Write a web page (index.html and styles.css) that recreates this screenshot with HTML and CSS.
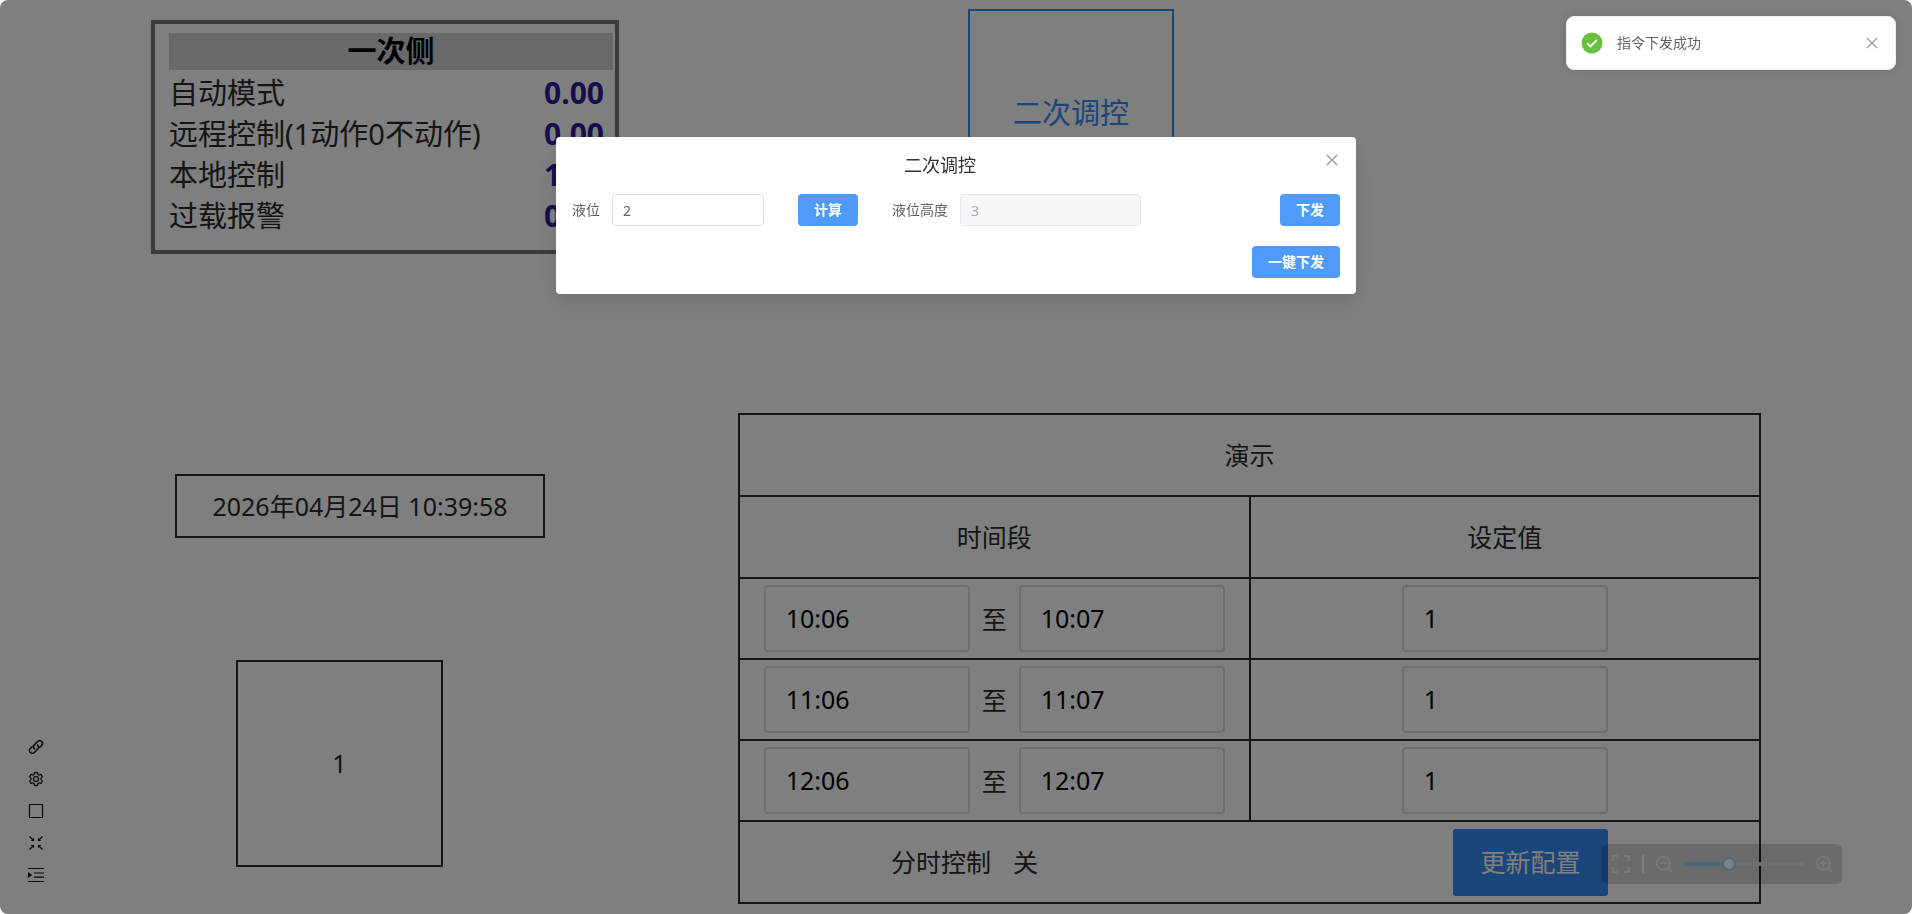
FILE: index.html
```html
<!DOCTYPE html>
<html lang="zh-CN">
<head>
<meta charset="utf-8">
<title>二次调控</title>
<link rel="stylesheet" href="styles.css">
</head>
<body>
<main class="stage">
  <section class="node panel">
    <h2 class="panel-title">一次侧</h2>
    <dl class="readings">
      <div class="reading"><dt>自动模式</dt><dd>0.00</dd></div>
      <div class="reading"><dt>远程控制(1动作0不动作)</dt><dd>0.00</dd></div>
      <div class="reading"><dt>本地控制</dt><dd>1.00</dd></div>
      <div class="reading"><dt>过载报警</dt><dd>0.00</dd></div>
    </dl>
  </section>
  <button class="node box box-link" type="button">二次调控</button>
  <time class="node box box-clock">2026年04月24日 10:39:58</time>
  <div class="node box box-value">1</div>
  <div class="node schedule">
    <table class="schedule-table">
      <tr><th colspan="2">演示</th></tr>
      <tr><th>时间段</th><th>设定值</th></tr>
      <tr class="slot">
        <td><div class="range"><input class="field" type="text" value="10:06" aria-label="开始时间 1"><span class="to">至</span><input class="field" type="text" value="10:07" aria-label="结束时间 1"></div></td>
        <td><div class="setpoint"><input class="field" type="text" value="1" aria-label="设定值 1"></div></td>
      </tr>
      <tr class="slot">
        <td><div class="range"><input class="field" type="text" value="11:06" aria-label="开始时间 2"><span class="to">至</span><input class="field" type="text" value="11:07" aria-label="结束时间 2"></div></td>
        <td><div class="setpoint"><input class="field" type="text" value="1" aria-label="设定值 2"></div></td>
      </tr>
      <tr class="slot">
        <td><div class="range"><input class="field" type="text" value="12:06" aria-label="开始时间 3"><span class="to">至</span><input class="field" type="text" value="12:07" aria-label="结束时间 3"></div></td>
        <td><div class="setpoint"><input class="field" type="text" value="1" aria-label="设定值 3"></div></td>
      </tr>
      <tr>
        <td colspan="2"><div class="schedule-foot"><span class="mode"><span>分时控制</span><span>关</span></span><button class="update" type="button">更新配置</button></div></td>
      </tr>
    </table>
  </div>
</main>

<nav class="tools" aria-label="工具">
  <button class="icon-button" type="button" aria-label="链接"><svg viewBox="0 0 16 16"><g fill="none" stroke="currentColor" stroke-width="1.5" stroke-linecap="round"><path d="M6.500 9.900a2.700 2.700 0 0 1-.2-4L9.700 2.500a2.700 2.700 0 0 1 4 3.900L11.600 8.500"/><path d="M9.500 6.100a2.700 2.700 0 0 1 .2 4L6.300 13.500a2.700 2.700 0 0 1-4-3.900L4.400 7.500"/></g></svg></button>
  <button class="icon-button" type="button" aria-label="设置"><svg viewBox="0 0 1024 1024"><path fill="currentColor" stroke="currentColor" stroke-width="20" d="M600.704 64a32 32 0 0 1 30.464 22.208l35.200 109.376c14.784 7.232 28.928 15.360 42.432 24.512l112.384-24.192a32 32 0 0 1 34.432 15.360L944.320 364.800a32 32 0 0 1-4.032 37.504l-77.120 85.120a357.120 357.120 0 0 1 0 49.024l77.120 85.248a32 32 0 0 1 4.032 37.504l-88.704 153.600a32 32 0 0 1-34.432 15.296L708.800 803.904c-13.440 9.088-27.648 17.280-42.368 24.512l-35.264 109.376A32 32 0 0 1 600.704 960H423.296a32 32 0 0 1-30.464-22.208L357.696 828.480a351.616 351.616 0 0 1-42.560-24.640l-112.320 24.256a32 32 0 0 1-34.432-15.360L79.680 659.200a32 32 0 0 1 4.032-37.504l77.120-85.248a357.120 357.120 0 0 1 0-48.896l-77.120-85.248A32 32 0 0 1 79.680 364.800l88.704-153.600a32 32 0 0 1 34.432-15.296l112.320 24.256c13.568-9.152 27.776-17.408 42.560-24.640l35.200-109.312A32 32 0 0 1 423.232 64H600.640zm-23.424 64H446.720l-36.352 113.088-24.512 11.968a294.113 294.113 0 0 0-34.816 20.096l-22.656 15.360-116.224-25.088-65.280 113.152 79.680 88.192-1.920 27.136a293.120 293.120 0 0 0 0 40.192l1.920 27.136-79.808 88.192 65.344 113.152 116.224-25.024 22.656 15.296a294.113 294.113 0 0 0 34.816 20.096l24.512 11.968L446.720 896h130.688l36.480-113.152 24.448-11.904a288.282 288.282 0 0 0 34.752-20.096l22.592-15.296 116.288 25.024 65.280-113.152-79.744-88.192 1.920-27.136a293.120 293.120 0 0 0 0-40.256l-1.920-27.136 79.808-88.128-65.344-113.152-116.288 24.960-22.592-15.232a287.616 287.616 0 0 0-34.752-20.096l-24.448-11.904L577.344 128zM512 320a192 192 0 1 1 0 384 192 192 0 0 1 0-384zm0 64a128 128 0 1 0 0 256 128 128 0 0 0 0-256z"/></svg></button>
  <button class="icon-button" type="button" aria-label="选区"><svg viewBox="0 0 16 16"><path fill="none" stroke="currentColor" stroke-width="1.200" d="M1.500 1.500h13v13h-13z"/></svg></button>
  <button class="icon-button" type="button" aria-label="收缩"><svg viewBox="0 0 16 16"><path fill="none" stroke="currentColor" stroke-width="1.200" d="M1.500 1.500L5 5M14.500 1.500L11 5M1.500 14.500L5 11M14.500 14.500L11 11"/><path fill="currentColor" d="M6 6V2.800L2.800 6zM10 6V2.800L13.200 6zM6 10v3.200L2.800 10zM10 10v3.200l3.200-3.200z"/></svg></button>
  <button class="icon-button" type="button" aria-label="展开菜单"><svg viewBox="0 0 16 16"><path fill="none" stroke="currentColor" stroke-width="1.200" d="M0 1.500h16M6 6h10M6 10.200h10M0 14.500h16"/><path fill="currentColor" d="M0 5l4.200 3L0 11z"/></svg></button>
</nav>

<div class="zoombar">
  <button class="icon-button fit" type="button" aria-label="全屏"><svg viewBox="0 0 18 18"><path fill="none" stroke="currentColor" stroke-width="1.600" d="M1 6V1h5M12 1h5v5M17 12v5h-5M6 17H1v-5"/></svg></button>
  <span class="divider"></span>
  <button class="icon-button" type="button" aria-label="缩小"><svg viewBox="0 0 16 16"><g fill="none" stroke="currentColor" stroke-width="1.300"><circle cx="7.200" cy="7.200" r="6.500"/><path d="M4 7.200h6.400M12 12l3.700 3.700"/></g></svg></button>
  <input class="zoom-range" type="range" min="0" max="100" value="36" aria-label="缩放">
  <button class="icon-button" type="button" aria-label="放大"><svg viewBox="0 0 16 16"><g fill="none" stroke="currentColor" stroke-width="1.300"><circle cx="7.200" cy="7.200" r="6.500"/><path d="M4 7.200h6.400M7.200 4v6.400M12 12l3.700 3.700"/></g></svg></button>
</div>

<div class="overlay">
  <section class="dialog" role="dialog" aria-modal="true" aria-labelledby="dialog-title">
    <h1 class="dialog-title" id="dialog-title">二次调控</h1>
    <button class="icon-button dialog-close" type="button" aria-label="关闭"><svg viewBox="0 0 16 16"><path fill="none" stroke="currentColor" stroke-width="1.100" d="M3 3l10 10M13 3L3 13"/></svg></button>
    <form class="form">
      <div class="form-row">
        <label class="label" for="level">液位</label>
        <input class="input level" id="level" type="text" value="2">
        <button class="primary calc" type="button">计算</button>
        <label class="label" for="height">液位高度</label>
        <input class="input height" id="height" type="text" value="3" disabled>
        <button class="primary send" type="button">下发</button>
      </div>
      <div class="form-row"><button class="primary send" type="button">一键下发</button></div>
    </form>
  </section>
</div>

<div class="toast" role="status">
  <svg class="toast-icon" viewBox="0 0 24 24"><circle cx="12" cy="12" r="10.500" fill="#67c23a"/><path d="M7.200 12.300l3.300 3.200 6.300-6.500" fill="none" stroke="#fff" stroke-width="1.900"/></svg>
  <p class="toast-text">指令下发成功</p>
  <button class="icon-button" type="button" aria-label="关闭通知"><svg viewBox="0 0 16 16"><path fill="none" stroke="currentColor" stroke-width="1.100" d="M3 3l10 10M13 3L3 13"/></svg></button>
</div>
</body>
</html>
```
FILE: styles.css
```css
* {
  box-sizing: border-box;
}

body {
  margin: 0;
  min-height: 100vh;
  overflow: hidden;
  background: #fff;
  color: #2a2a2a;
  font-family: "Noto Sans", "Noto Sans CJK SC", sans-serif;
  font-size: 14px;
}

h1, h2, p, dl, dd {
  margin: 0;
}

button, input {
  font: inherit;
  color: inherit;
}

button {
  padding: 0;
  border: 0;
  background: none;
  cursor: pointer;
}

/* Free canvas: each node is placed by its own coordinates */
.stage {
  position: relative;
  height: 100vh;
  font-size: 25px;
}

.node {
  position: absolute;
}

.panel {
  left: 151px;
  top: 20px;
  width: 468px;
  padding: 9px 2px 14px 14px;
  border: 4px solid #787878;
  font-size: 29px;
}

.panel-title {
  padding-bottom: 2px;
  background: #d3d3d3;
  color: #000;
  font-size: 29px;
  line-height: 35px;
  text-align: center;
}

.readings {
  padding: 2px 9px 0 0;
}

.reading {
  display: flex;
  justify-content: space-between;
  line-height: 41px;
}

.reading dd {
  color: #2c1a9e;
  font-size: 30px;
  font-weight: 700;
}

.box {
  display: flex;
  align-items: center;
  justify-content: center;
  padding-bottom: 2px;
  border: 2px solid #2a2a2a;
}

.box-link {
  left: 968px;
  top: 9px;
  width: 206px;
  height: 206px;
  border-color: #368cf8;
  color: #368cf8;
  font-size: 29px;
}

.box-clock {
  left: 175px;
  top: 474px;
  width: 370px;
  height: 64px;
}

.box-value {
  left: 236px;
  top: 660px;
  width: 207px;
  height: 207px;
}

.schedule {
  left: 738px;
  top: 413px;
  width: 1023px;
}

.schedule-table {
  width: 100%;
  border-collapse: collapse;
  table-layout: fixed;
}

.schedule-table tr {
  height: 82px;
}

.schedule-table .slot {
  height: 81px;
}

.schedule-table th,
.schedule-table td {
  padding: 0;
  border: 2px solid #2a2a2a;
  font-weight: 400;
  text-align: center;
}

.schedule-table th {
  padding-bottom: 2px;
}

.range,
.setpoint {
  display: flex;
  align-items: center;
  justify-content: center;
  gap: 12px;
}

.to,
.mode {
  padding-bottom: 2px;
}

.field {
  width: 206px;
  height: 67px;
  padding: 0 20px 2px;
  border: 2px solid #dcdcdc;
  border-radius: 4px;
  background: transparent;
  color: #000;
}

.schedule-foot {
  display: flex;
  align-items: center;
  justify-content: space-between;
  padding: 0 151px;
}

.mode {
  display: flex;
  gap: 22px;
}

.update {
  width: 155px;
  height: 67px;
  padding-bottom: 2px;
  border-radius: 3px;
  background: #368cf8;
  color: #fff;
}

.icon-button {
  display: block;
  width: 16px;
  height: 16px;
}

.icon-button svg {
  display: block;
  width: 100%;
  height: 100%;
}

.tools {
  position: absolute;
  left: 28px;
  bottom: 31px;
  display: flex;
  flex-direction: column;
  gap: 16px;
  color: #111;
}

.zoombar {
  position: absolute;
  right: 70px;
  bottom: 30px;
  display: flex;
  align-items: center;
  height: 40px;
  padding: 0 10px;
  gap: 12px;
  border-radius: 6px;
  background: rgba(0, 0, 0, 0.16);
  color: #fafafa;
}

.fit {
  width: 18px;
  height: 18px;
}

.divider {
  width: 2px;
  height: 18px;
  background: #fafafa;
}

.zoom-range {
  width: 120px;
  height: 14px;
  margin: 0;
  appearance: none;
  background: linear-gradient(to right, #91d5ff 37%, #e1e1e1 37%) center / 100% 4px no-repeat;
}

.zoom-range::-webkit-slider-thumb {
  appearance: none;
  width: 14px;
  height: 14px;
  border: 2px solid #91d5ff;
  border-radius: 50%;
  background: #fff;
}

.overlay {
  position: fixed;
  inset: 0;
  padding-top: 15vh;
  border-radius: 8px;
  background: rgba(0, 0, 0, 0.5);
}

.dialog {
  position: relative;
  width: 800px;
  max-width: 100%;
  margin: 0 auto;
  padding: 16px;
  border-radius: 4px;
  background: #fff;
  box-shadow: 0 12px 32px 4px rgba(0, 0, 0, 0.04), 0 8px 20px rgba(0, 0, 0, 0.08);
  color: #606266;
}

.dialog-title {
  padding-right: 32px;
  color: #303133;
  font-size: 18px;
  font-weight: 400;
  line-height: 24px;
  text-align: center;
}

.dialog-close {
  position: absolute;
  top: 15px;
  right: 16px;
  color: #909399;
}

.form {
  display: flex;
  flex-direction: column;
  gap: 20px;
  padding-top: 17px;
}

.form-row {
  display: flex;
  align-items: center;
}

.label {
  margin-right: 12px;
  padding-bottom: 2px;
}

.input {
  height: 32px;
  padding: 0 10px;
  border: 1px solid #dcdfe6;
  border-radius: 4px;
  background: #fff;
}

.input:disabled {
  border-color: #e4e7ed;
  background: #f5f7fa;
  color: #a8abb2;
}

.level {
  width: 152px;
}

.height {
  width: 181px;
}

.primary {
  height: 32px;
  padding: 0 16px 2px;
  border-radius: 4px;
  background: #4f9bfa;
  color: #fff;
  font-weight: 700;
}

.calc {
  margin: 0 34px;
}

.send {
  margin-left: auto;
}

.toast {
  position: fixed;
  top: 16px;
  right: 16px;
  display: flex;
  align-items: center;
  width: 330px;
  height: 54px;
  padding: 0 15px 0 13px;
  border: 1px solid #ebeef5;
  border-radius: 8px;
  background: #fff;
  box-shadow: 0 0 12px rgba(0, 0, 0, 0.12);
  color: #606266;
}

.toast-icon {
  width: 24px;
  height: 24px;
  margin-right: 13px;
}

.toast-text {
  flex: 1;
  padding-bottom: 2px;
}

.toast .icon-button {
  color: #909399;
}
```
